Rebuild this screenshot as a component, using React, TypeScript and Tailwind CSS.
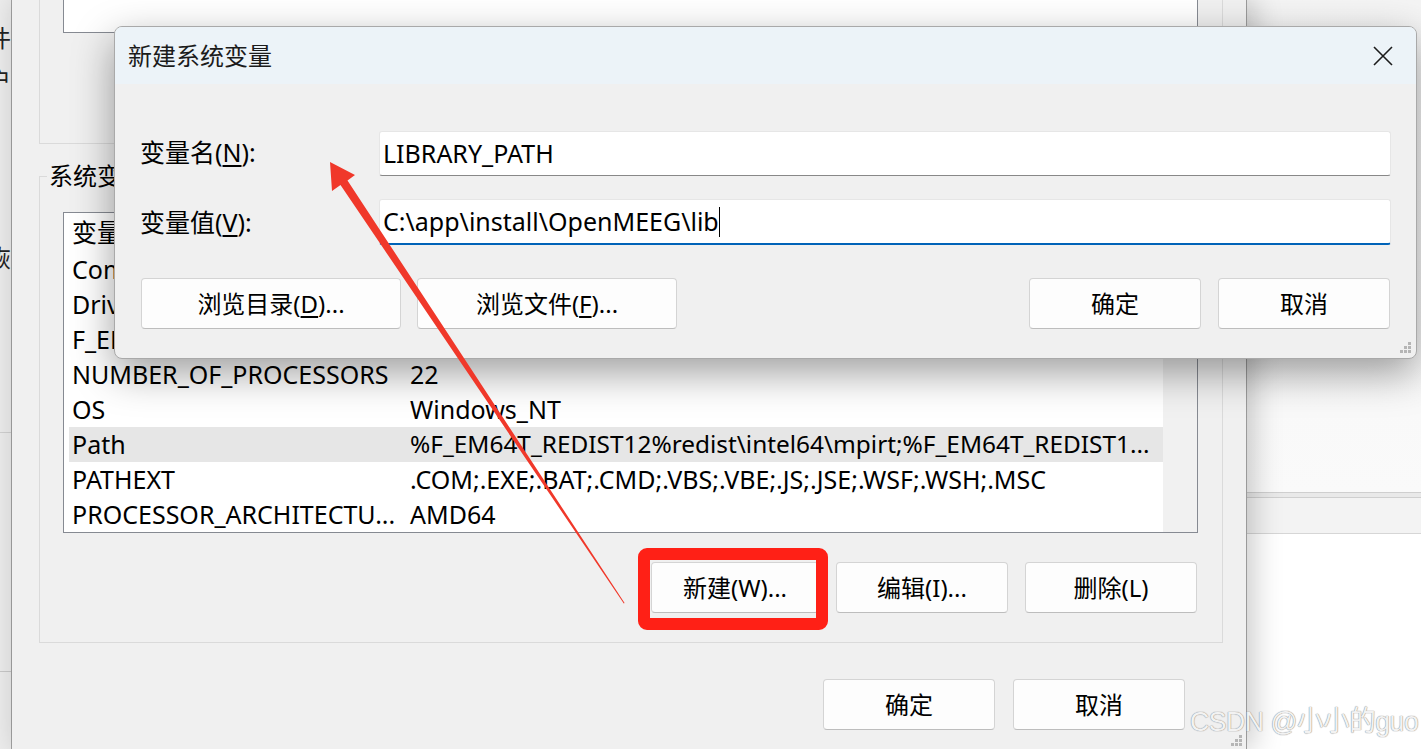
import React from "react";

const rows: [string, string][] = [
  ["ComSpec", "C:\\WINDOWS\\system32\\cmd.exe"],
  ["DriverData", "C:\\Windows\\System32\\Drivers\\DriverData"],
  ["F_EM64T_REDIST12", "C:\\Program Files (x86)\\Common Files\\Intel\\Shared Libraries\\"],
  ["NUMBER_OF_PROCESSORS", "22"],
  ["OS", "Windows_NT"],
  ["Path", "%F_EM64T_REDIST12%redist\\intel64\\mpirt;%F_EM64T_REDIST1..."],
  ["PATHEXT", ".COM;.EXE;.BAT;.CMD;.VBS;.VBE;.JS;.JSE;.WSF;.WSH;.MSC"],
  ["PROCESSOR_ARCHITECTU...", "AMD64"],
];

const Btn = ({ children, w = "w-[172px]" }: { children: React.ReactNode; w?: string }) => (
  <button
    className={`${w} h-[51px] shrink-0 rounded-[4px] border border-[#d4d4d4] border-b-[#bdbdbd] bg-[#fdfdfd] text-[24px] leading-none text-black flex items-center justify-center whitespace-nowrap`}
  >
    {children}
  </button>
);

const Grip = () => (
  <svg width="12" height="12" viewBox="0 0 12 12">
    <rect x="8" y="0" width="3" height="3" fill="#b5b5b5" />
    <rect x="4" y="4" width="3" height="3" fill="#b5b5b5" />
    <rect x="8" y="4" width="3" height="3" fill="#b5b5b5" />
    <rect x="0" y="8" width="3" height="3" fill="#b5b5b5" />
    <rect x="4" y="8" width="3" height="3" fill="#b5b5b5" />
    <rect x="8" y="8" width="3" height="3" fill="#b5b5b5" />
  </svg>
);

const App = () => {
  return (
    <div className="relative w-[1421px] h-[749px] overflow-hidden bg-white flex font-['Noto_Sans','Noto_Sans_CJK_SC',sans-serif] text-black">
      {/* window peeking in at the far left */}
      <div className="w-[12px] shrink-0 h-full bg-[#ececec] border-r border-[#a3a3a3] overflow-hidden flex flex-col text-[24px] text-[#222]">
        <span className="-ml-[13px] mt-[24px] leading-[28px]">件</span>
        <span className="-ml-[13px] mt-[14px] leading-[28px]">户</span>
        <span className="-ml-[13px] mt-[150px] leading-[28px]">恢</span>
        <div className="mt-[160px] border-t border-[#d0d0d0]" />
        <div className="mt-[238px] border-t border-[#c8c8c8]" />
      </div>

      {/* environment variables window */}
      <div className="relative z-10 w-[1235px] shrink-0 h-full bg-[#f0f0f0] border-r border-[#9a9a9a] shadow-[6px_0_28px_rgba(0,0,0,0.22)] flex flex-col">
        <div className="ml-[27px] w-[1184px] h-[144px] shrink-0 border-x border-b border-[#dadada]">
          <div className="ml-[23px] w-[1135px] h-[33px] bg-white border-x border-b border-[#868a92]" />
        </div>

        <fieldset className="ml-[27px] mt-[17px] w-[1184px] border border-[#dadada] flex flex-col">
          <legend className="ml-[7px] px-[2px] text-[24px] leading-[30px]">系统变量(S)</legend>
          <div className="ml-[23px] mt-[21px] w-[1135px] h-[321px] bg-white border border-[#868a92] flex">
            <div className="flex-1 pl-[5px] flex flex-col text-[25px] overflow-hidden">
              <div className="h-[39px] flex items-center">
                <span className="w-[341px] pl-[3px]">变量</span>
                <span>值</span>
              </div>
              {rows.map(([k, v]) => (
                <div
                  key={k}
                  className={`h-[35px] flex items-center whitespace-nowrap ${k === "Path" ? "bg-[#e6e6e6]" : ""}`}
                >
                  <span className="w-[341px] pl-[3px] shrink-0">{k}</span>
                  <span className={k === "Path" ? "text-[24.4px]" : ""}>{v}</span>
                </div>
              ))}
            </div>
            <div className="w-[34px] bg-[#f1f1f1]" />
          </div>
          <div className="mt-[29px] mr-[25px] flex justify-end gap-[17px]">
            <Btn w="w-[168px]">新建(W)...</Btn>
            <Btn>编辑(I)...</Btn>
            <Btn>删除(L)</Btn>
          </div>
          <div className="h-[29px]" />
        </fieldset>

        <div className="mt-[36px] mr-[61px] flex justify-end gap-[18px]">
          <Btn>确定</Btn>
          <Btn>取消</Btn>
        </div>
        <div className="absolute right-[3px] bottom-[2px]">
          <Grip />
        </div>
      </div>

      {/* desktop area on the right */}
      <div className="flex-1 h-full flex flex-col">
        <div className="h-[492px] bg-gradient-to-b from-[#f4f4f4] to-[#fafafa]" />
        <div className="h-[6px] border-y border-[#cfcfcf] bg-[#e9e9e9]" />
        <div className="h-[36px] bg-[#f3f3f3] border-b border-[#d6d6d6]" />
        <div className="flex-1 bg-white" />
      </div>

      {/* new system variable dialog */}
      <div className="absolute z-20 left-[114px] top-[26px] w-[1303px] h-[333px] rounded-[8px] border border-[#a9a9a9] bg-[#f0f0f0] shadow-[0_14px_40px_rgba(0,0,0,0.38)] overflow-hidden flex flex-col">
        <div className="h-[57px] shrink-0 bg-[#ecf3f8] flex items-center justify-between pl-[13px] pr-[23px]">
          <span className="text-[24px] text-[#1b1b1b]">新建系统变量</span>
          <svg width="20" height="20" viewBox="0 0 20 20">
            <path d="M1 1L19 19M19 1L1 19" stroke="#1b1b1b" strokeWidth="1.6" fill="none" />
          </svg>
        </div>
        <div className="flex-1 flex flex-col pl-[25px] pr-[25px]">
          <div className="mt-[47px] flex items-center">
            <span className="w-[239px] text-[25px] leading-[30px] -mt-[3px]">
              变量名(<span className="underline underline-offset-[3px]">N</span>):
            </span>
            <div className="flex-1 h-[45px] bg-white border border-[#e6e6e6] border-b-[#888888] rounded-[3px] flex items-center pl-[3px] text-[25px]">
              LIBRARY_PATH
            </div>
          </div>
          <div className="mt-[23px] flex items-center">
            <span className="w-[239px] text-[25px] leading-[30px]">
              变量值(<span className="underline underline-offset-[3px]">V</span>):
            </span>
            <div className="flex-1 h-[46px] bg-white border border-[#e6e6e6] border-b-2 border-b-[#0063b8] rounded-[3px] flex items-center pl-[3px] text-[25px]">
              C:\app\install\OpenMEEG\lib
              <span className="inline-block w-px h-[30px] bg-black" />
            </div>
          </div>
          <div className="mt-[33px] flex items-center pl-[1px]">
            <Btn w="w-[260px]">
              浏览目录(<span className="underline underline-offset-[3px]">D</span>)...
            </Btn>
            <div className="ml-[16px]">
              <Btn w="w-[260px]">
                浏览文件(<span className="underline underline-offset-[3px]">F</span>)...
              </Btn>
            </div>
            <div className="ml-auto flex gap-[17px] pr-[1px]">
              <Btn>确定</Btn>
              <Btn>取消</Btn>
            </div>
          </div>
        </div>
        <div className="absolute right-[4px] bottom-[4px]">
          <Grip />
        </div>
      </div>

      {/* annotation: red frame around the New button */}
      <div className="absolute z-30 left-[638px] top-[548px] w-[190px] h-[82px] rounded-[9px] border-[12px] border-[#ff2016]" />

      {/* annotation: red arrow */}
      <svg className="absolute z-30 left-0 top-0 pointer-events-none" width="1421" height="749" viewBox="0 0 1421 749">
        <polygon
          points="330,162 355,175 347.5,180.5 624.6,603 623.8,603.4 340.5,185 332,191"
          fill="#f0382a"
        />
      </svg>

      {/* watermark */}
      <div className="absolute z-40 left-[1190px] top-[708px] origin-left scale-x-[0.95] whitespace-nowrap text-[28px] leading-none tracking-[-0.5px] font-['Liberation_Sans','Noto_Sans_CJK_SC',sans-serif] text-[#f2f2f2] [text-shadow:0_0_1px_#8f8f8f,0_0_1px_#8f8f8f]">
        CSDN @小小的guo
      </div>
    </div>
  );
};

export default App;
